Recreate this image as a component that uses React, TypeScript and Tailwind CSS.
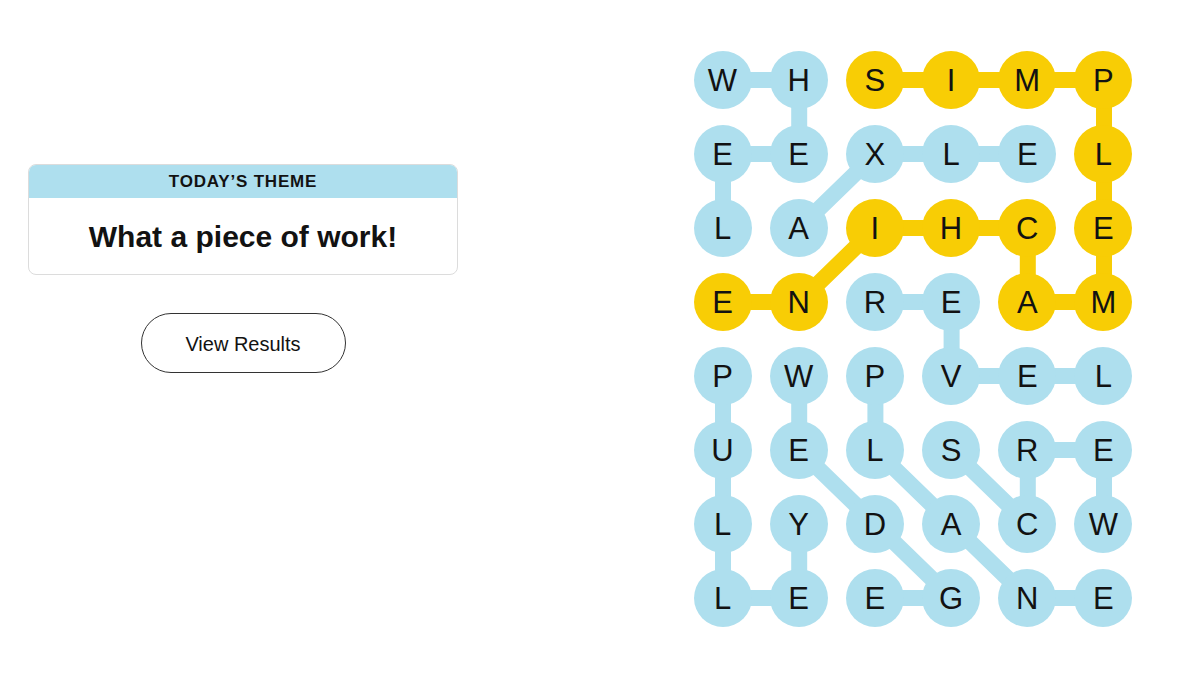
import React from "react";

const BLUE = "#aedfee";
const YELLOW = "#f8cd05";

const LETTERS = [
  "WHSIMP",
  "EEXLEL",
  "LAIHCE",
  "ENREAM",
  "PWPVEL",
  "UELSRE",
  "LYDACW",
  "LEEGNE",
];

const YELLOW_CELLS = new Set([
  "0,2", "0,3", "0,4", "0,5", "1,5", "2,5", "3,5", "3,4", "2,4", "2,3", "2,2", "3,1", "3,0",
]);

// each word is a path of [row, col] cells
const WORDS: { color: string; path: [number, number][] }[] = [
  { color: BLUE, path: [[0, 0], [0, 1], [1, 1], [1, 0], [2, 0]] },
  { color: BLUE, path: [[2, 1], [1, 2], [1, 3], [1, 4]] },
  { color: BLUE, path: [[3, 2], [3, 3], [4, 3], [4, 4], [4, 5]] },
  { color: BLUE, path: [[4, 0], [5, 0], [6, 0], [7, 0], [7, 1], [6, 1]] },
  { color: BLUE, path: [[4, 1], [5, 1], [6, 2], [7, 3], [7, 2]] },
  { color: BLUE, path: [[4, 2], [5, 2], [6, 3], [7, 4], [7, 5]] },
  { color: BLUE, path: [[5, 3], [6, 4], [5, 4], [5, 5], [6, 5]] },
  {
    color: YELLOW,
    path: [[0, 2], [0, 3], [0, 4], [0, 5], [1, 5], [2, 5], [3, 5], [3, 4], [2, 4], [2, 3], [2, 2], [3, 1], [3, 0]],
  },
];

const SIZE = 58;
const COL_STEP = 76.2;
const ROW_STEP = 74;

function cx(c: number) {
  return SIZE / 2 + c * COL_STEP;
}
function cy(r: number) {
  return SIZE / 2 + r * ROW_STEP;
}

function Board() {
  return (
    <div className="relative w-[439px] h-[576px]">
      <svg className="absolute inset-0" width={439} height={576}>
        {WORDS.map((w, i) => (
          <polyline
            key={i}
            points={w.path.map(([r, c]) => `${cx(c)},${cy(r)}`).join(" ")}
            fill="none"
            stroke={w.color}
            strokeWidth={16}
            strokeLinejoin="round"
          />
        ))}
      </svg>
      <div className="relative grid grid-cols-[repeat(6,58px)] grid-rows-[repeat(8,58px)] gap-x-[18.2px] gap-y-[16px]">
        {LETTERS.map((row, r) =>
          row.split("").map((ch, c) => (
            <div
              key={`${r}-${c}`}
              className={`flex items-center justify-center rounded-full pt-[3px] text-[31px] text-[#121212] ${
                YELLOW_CELLS.has(`${r},${c}`) ? "bg-[#f8cd05]" : "bg-[#aedfee]"
              }`}
            >
              {ch}
            </div>
          ))
        )}
      </div>
    </div>
  );
}

export default function App() {
  return (
    <div className="w-[1200px] h-[675px] bg-white flex font-['Liberation_Sans',Arial,sans-serif]">
      <div className="ml-[28px] mt-[164px] w-[430px] flex flex-col">
        <div className="rounded-lg border border-[#dcdcdc] overflow-hidden">
          <div className="bg-[#aedfee] h-[33px] flex items-center justify-center pt-[1px] text-[17px] font-semibold tracking-[0.8px] text-[#121212]">
            TODAY’S THEME
          </div>
          <div className="h-[76px] flex items-center justify-center text-[30px] font-bold text-[#121212]">
            What a piece of work!
          </div>
        </div>
        <button
          type="button"
          className="mt-[38px] self-center w-[205px] h-[60px] rounded-full border border-[#333] pt-[2px] text-[20px] text-[#121212] bg-white"
        >
          View Results
        </button>
      </div>
      <div className="ml-[235.5px] mt-[50.5px]">
        <Board />
      </div>
    </div>
  );
}
